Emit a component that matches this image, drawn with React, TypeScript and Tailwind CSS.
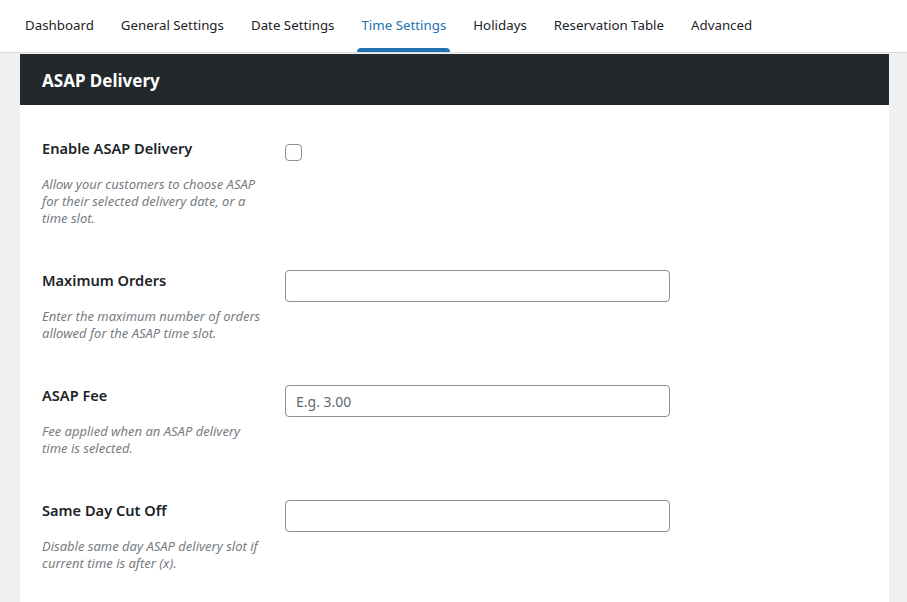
import React from "react";

const tabs = [
  "Dashboard",
  "General Settings",
  "Date Settings",
  "Time Settings",
  "Holidays",
  "Reservation Table",
  "Advanced",
];

type Row = {
  label: string;
  desc: string[];
  field: "checkbox" | "input";
  placeholder?: string;
};

const rows: Row[] = [
  {
    label: "Enable ASAP Delivery",
    desc: [
      "Allow your customers to choose ASAP",
      "for their selected delivery date, or a",
      "time slot.",
    ],
    field: "checkbox",
  },
  {
    label: "Maximum Orders",
    desc: ["Enter the maximum number of orders", "allowed for the ASAP time slot."],
    field: "input",
  },
  {
    label: "ASAP Fee",
    desc: ["Fee applied when an ASAP delivery", "time is selected."],
    field: "input",
    placeholder: "E.g. 3.00",
  },
  {
    label: "Same Day Cut Off",
    desc: ["Disable same day ASAP delivery slot if", "current time is after (x)."],
    field: "input",
  },
];

export default function App() {
  return (
    <div
      className="min-h-[602px] w-full bg-[#f0f0f1] text-[#1d2327]"
      style={{ fontFamily: '"Noto Sans", "Open Sans", sans-serif' }}
    >
      {/* Tabs bar */}
      <div className="flex h-[53px] items-stretch border-b border-[#dcdcde] bg-white pl-[21px]">
        {tabs.map((t) => {
          const active = t === "Time Settings";
          return (
            <div
              key={t}
              className={`relative mr-[19px] flex items-center px-[4px] text-[13.3px] ${
                active ? "text-[#2271b1]" : "text-[#1d2327]"
              }`}
            >
              <span className="whitespace-nowrap">{t}</span>
              {active && (
                <span className="absolute bottom-0 left-0 right-0 h-[4px] rounded-t-[4px] bg-[#2271b1]" />
              )}
            </div>
          );
        })}
      </div>

      {/* Panel */}
      <div className="ml-[20px] mr-[18px] mt-[1px]">
        <div className="flex h-[51px] items-center bg-[#23282d] px-[22px] pt-[2px]">
          <h2 className="text-[17px] font-bold text-white">ASAP Delivery</h2>
        </div>
        <div className="bg-white pl-[22px] pt-[33px]">
          {rows.map((r) => (
            <div key={r.label} className="flex pb-[43px]">
              <div className="w-[243px] shrink-0">
                <div className="text-[14.6px] font-semibold leading-[20px] text-[#1d2327]">
                  {r.label}
                </div>
                <div className="mt-[18px] text-[13px] italic leading-[17px] text-[#787c82]">
                  {r.desc.map((d) => (
                    <div key={d} className="whitespace-nowrap">
                      {d}
                    </div>
                  ))}
                </div>
              </div>
              <div>
                {r.field === "checkbox" ? (
                  <div className="mt-[6px] h-[17px] w-[17px] rounded-[4px] border border-[#8c8f94] bg-white" />
                ) : (
                  <input
                    type="text"
                    placeholder={r.placeholder}
                    className="h-[32px] w-[385px] rounded-[4px] border border-[#8c8f94] bg-white px-[10px] text-[14px] text-[#2c3338] outline-none placeholder:text-[#646970]"
                  />
                )}
              </div>
            </div>
          ))}
        </div>
      </div>
    </div>
  );
}
